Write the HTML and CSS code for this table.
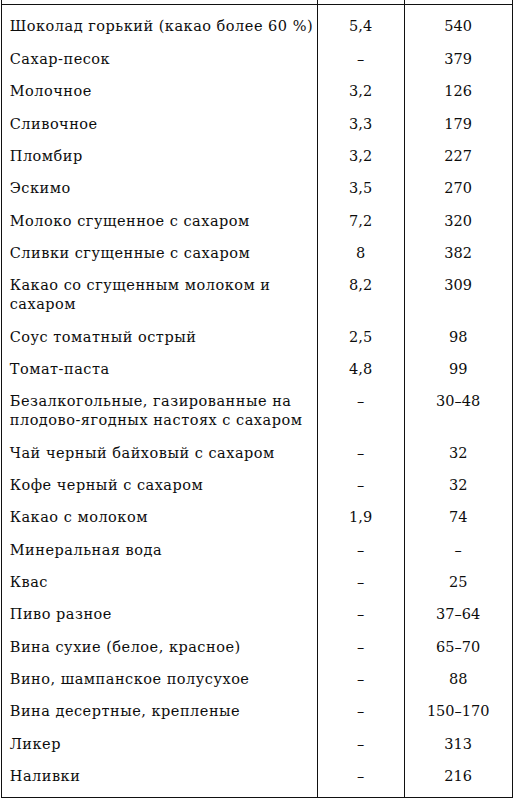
FILE: index.html
```html
<!DOCTYPE html>
<html lang="ru">
<head>
<meta charset="utf-8">
<link rel="stylesheet" href="styles.css">
</head>
<body>
<table class="tbl">
<colgroup><col class="c1"><col class="c2"><col class="c3"></colgroup>
<thead><tr class="head"><th></th><th></th><th></th></tr></thead>
<tbody>
<tr><td>Шоколад горький (какао более 60&nbsp;%)</td><td>5,4</td><td>540</td></tr>
<tr><td>Сахар-песок</td><td>–</td><td>379</td></tr>
<tr><td>Молочное</td><td>3,2</td><td>126</td></tr>
<tr><td>Сливочное</td><td>3,3</td><td>179</td></tr>
<tr><td>Пломбир</td><td>3,2</td><td>227</td></tr>
<tr><td>Эскимо</td><td>3,5</td><td>270</td></tr>
<tr><td>Молоко сгущенное с сахаром</td><td>7,2</td><td>320</td></tr>
<tr><td>Сливки сгущенные с сахаром</td><td>8</td><td>382</td></tr>
<tr><td>Какао со сгущенным молоком и<br>сахаром</td><td>8,2</td><td>309</td></tr>
<tr><td>Соус томатный острый</td><td>2,5</td><td>98</td></tr>
<tr><td>Томат-паста</td><td>4,8</td><td>99</td></tr>
<tr><td>Безалкогольные, газированные на<br>плодово-ягодных настоях с сахаром</td><td>–</td><td>30–48</td></tr>
<tr><td>Чай черный байховый с сахаром</td><td>–</td><td>32</td></tr>
<tr><td>Кофе черный с сахаром</td><td>–</td><td>32</td></tr>
<tr><td>Какао с молоком</td><td>1,9</td><td>74</td></tr>
<tr><td>Минеральная вода</td><td>–</td><td>–</td></tr>
<tr><td>Квас</td><td>–</td><td>25</td></tr>
<tr><td>Пиво разное</td><td>–</td><td>37–64</td></tr>
<tr><td>Вина сухие (белое, красное)</td><td>–</td><td>65–70</td></tr>
<tr><td>Вино, шампанское полусухое</td><td>–</td><td>88</td></tr>
<tr><td>Вина десертные, крепленые</td><td>–</td><td>150–170</td></tr>
<tr><td>Ликер</td><td>–</td><td>313</td></tr>
<tr><td>Наливки</td><td>–</td><td>216</td></tr>
</tbody>
</table>
</body>
</html>
```
FILE: styles.css
```css
html, body {
  margin: 0;
  padding: 0;
  background: #ffffff;
}
body {
  font-family: "DejaVu Serif", "Liberation Serif", serif;
  font-size: 14.5px;
  color: #0d0d0d;
}
.tbl {
  border-collapse: collapse;
  table-layout: fixed;
  width: 511.5px;
  margin-left: 1.25px;
}
.c1 { width: 315px; }
.c2 { width: 87px; }
.c3 { width: 108px; }
.tbl th, .tbl td {
  border-left: 1.5px solid #111111;
  border-right: 1.5px solid #111111;
  padding: 0;
}
.head th {
  height: 4.3px;
  border-bottom: 1.5px solid #111111;
}
.tbl td {
  line-height: 19px;
  padding: 6.68px 0;
  vertical-align: top;
  text-align: center;
  white-space: nowrap;
}
.tbl td:first-child {
  text-align: left;
  padding-left: 7.5px;
  letter-spacing: 0.5px;
}
.tbl tbody tr:first-child td {
  padding-top: 12.2px;
}
.tbl tbody tr:last-child td {
  padding-bottom: 11.2px;
  border-bottom: 1.5px solid #111111;
}
```
